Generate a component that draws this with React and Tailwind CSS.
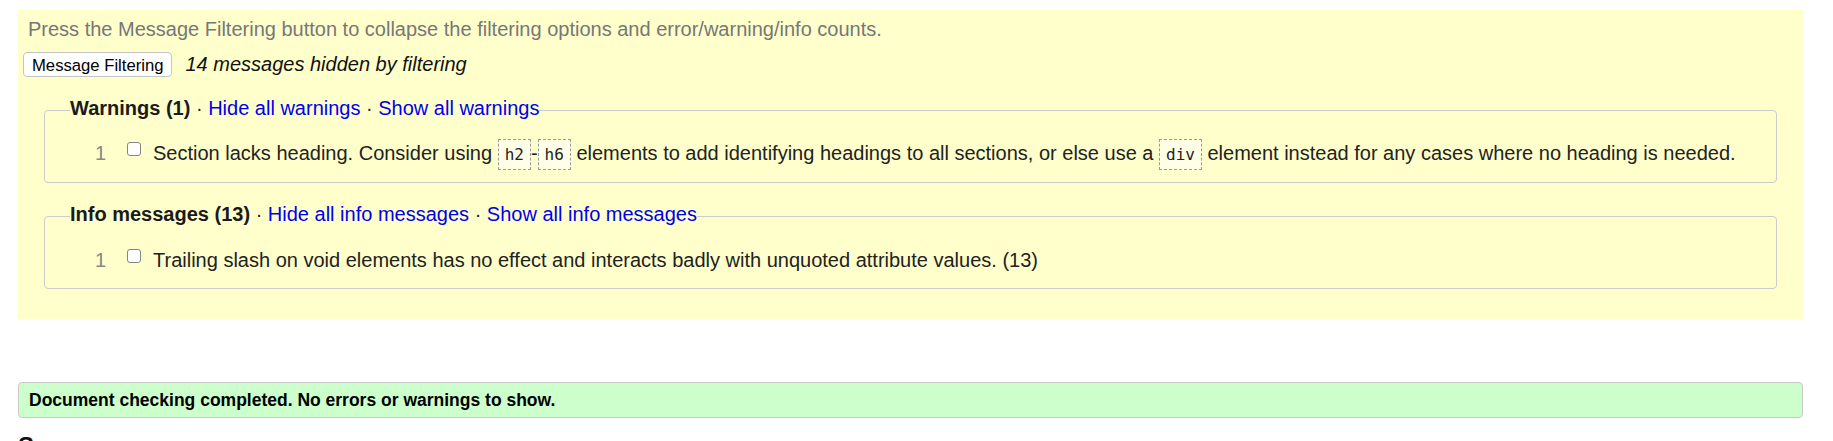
import React from 'react';

function Code({ children }) {
  return (
    <code className="border border-dashed border-[#9a9a9a] bg-[#ffffe8] px-[6px] py-[5px] text-[16px] font-['DejaVu_Sans_Mono',monospace] text-[#222]">
      {children}
    </code>
  );
}

function Group({ title, hideLabel, showLabel, className = '', children }) {
  return (
    <fieldset className={`mx-4 rounded border border-[#ccc] px-[25px] pb-[16px] ${className}`}>
      <legend className="pb-[4px] text-[20px] leading-[23px]">
        <b className="font-bold text-[#1a1a1a]">{title}</b>
        <span className="text-[#222]"> · </span>
        <a href="#" className="text-[#0000ee]">{hideLabel}</a>
        <span className="text-[#222]"> · </span>
        <a href="#" className="text-[#0000ee]">{showLabel}</a>
      </legend>
      {children}
    </fieldset>
  );
}

function Row({ count, children }) {
  return (
    <div className="whitespace-nowrap text-[20px] leading-[23px] text-[#222]">
      <span className="inline-block w-[36px] text-right text-[#888]">{count}</span>
      <input
        type="checkbox"
        className="ml-[21px] mr-[12px] mb-[4px] inline-block h-[14px] w-[14px] appearance-none rounded-[3px] border border-[#858585] bg-white align-baseline"
      />
      {children}
    </div>
  );
}

export default function App() {
  return (
    <div className="min-h-screen bg-white pt-[10px] font-['Liberation_Sans',Arial,sans-serif]">
      {/* Filtering panel */}
      <div className="ml-[18px] mr-[30px] bg-[#ffffcc] px-[10px] pt-[8px] pb-[30px]">
        <p className="text-[20px] leading-[23px] text-[#777]">
          Press the Message Filtering button to collapse the filtering options and error/warning/info counts.
        </p>
        <div className="mt-[11px] flex items-baseline gap-[13px] -ml-[5px]">
          <button className="h-[25px] rounded-[4px] border border-[#c4c4c4] bg-white px-[8px] text-[16.67px] text-black">
            Message Filtering
          </button>
          <span className="text-[20px] italic leading-[23px] text-[#111]">14 messages hidden by filtering</span>
        </div>

        <Group
          className="mt-[20px] pt-[18px]"
          title="Warnings (1)"
          hideLabel="Hide all warnings"
          showLabel="Show all warnings"
        >
          <Row count="1">
            Section lacks heading. Consider using <Code>h2</Code>-<Code>h6</Code> elements to add identifying headings to all sections, or else use a <Code>div</Code> element instead for any cases where no heading is needed.
          </Row>
        </Group>

        <Group
          className="mt-[20px] pt-[19px]"
          title="Info messages (13)"
          hideLabel="Hide all info messages"
          showLabel="Show all info messages"
        >
          <Row count="1">
            Trailing slash on void elements has no effect and interacts badly with unquoted attribute values. (13)
          </Row>
        </Group>
      </div>

      {/* Result */}
      <div className="mt-[63px] ml-[18px] mr-[30px] rounded border border-[#c8c8c8] bg-[#ccffcc] px-[10px] py-[7px] text-[17.5px] font-bold leading-[20px] text-black">
        Document checking completed. No errors or warnings to show.
      </div>

      <h2 className="mt-[13px] ml-[18px] text-[24px] font-bold leading-[29px] text-[#111]">Source</h2>
    </div>
  );
}
